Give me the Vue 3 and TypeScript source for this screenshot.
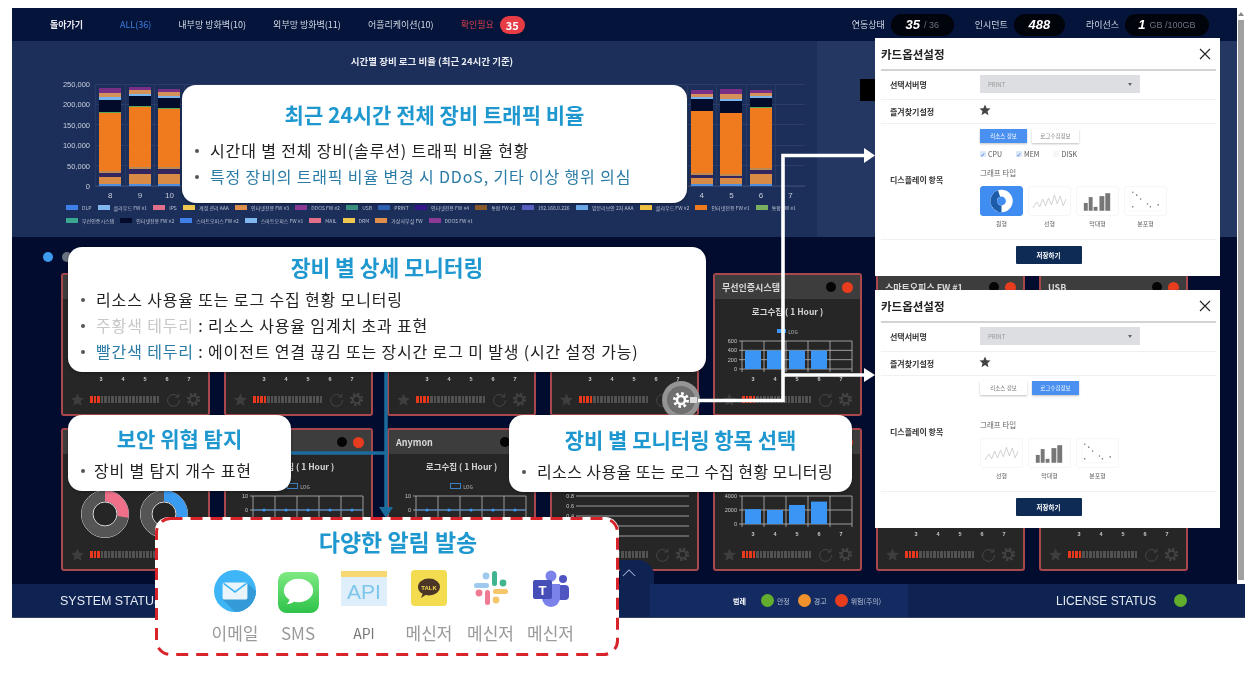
<script setup lang="ts">
interface Card {
  title: string
  kind: 'bars' | 'line' | 'donut' | 'level'
  ticks: string[]
  values: number[]
  lit: number
  covered?: boolean
  noAxis?: boolean
}

const tabs = [
  { label: 'ALL(36)', cls: 'tab--all' },
  { label: '내부망 방화벽(10)', cls: '' },
  { label: '외부망 방화벽(11)', cls: '' },
  { label: '어플리케이션(10)', cls: '' },
  { label: '확인필요', cls: 'tab--alert' },
]

const segColors = ['#4f8fe0', '#d98a45', '#33265f', '#b98a55', '#f07a1e', '#5aa858', '#020c2a', '#7ab3ee', '#d4925a', '#7a2f86']
const sample = [2, 8, 4, 2, 60, 1, 10, 2, 4, 4]
const hours = [8, 9, 10, 11, 12, 13, 14, 15, 16, 17, 18, 19, 20, 21, 22, 23, 0, 1, 2, 3, 4, 5, 6, 7]
const stacks: Record<number, number[]> = {
  8: [2, 7, 4, 2, 58, 1, 12, 3, 4, 5],
  9: [2, 10, 5, 2, 60, 1, 10, 2, 4, 3],
  10: [2, 10, 5, 2, 58, 1, 10, 2, 4, 3],
  4: [2, 6, 3, 2, 62, 0, 12, 2, 3, 4],
  5: [2, 6, 2, 2, 61, 0, 12, 2, 5, 5],
  6: [2, 10, 4, 2, 60, 1, 9, 2, 3, 3],
  7: [],
}
// only hours outside the callout get a label
const bars = hours.map((hour) => ({ hour, segs: stacks[hour] ?? sample, labelled: hour in stacks }))
const yLabels = ['250,000', '200,000', '150,000', '100,000', '50,000', '0']

const legendRows = [
  [
    ['DLP', '#3f7fe8'], ['클라우드 FW #1', '#7fb6ee'], ['IPS', '#e0708a'], ['계정 관리 AAA', '#f0c850'],
    ['인터넷전용 FW #3', '#e0904a'], ['DDOS FW #2', '#8a3a94'], ['USB', '#3a9080'], ['PRINT', '#2f5fb0'],
    ['인터넷전용 FW #4', '#33168a'], ['통합 FW #2', '#8a5a2a'], ['192.168.0.226', '#5a60c0'], ['망분리보안 2차 AAA', '#6aa8e8'],
    ['클라우드 FW #2', '#f0c040'], ['인터넷전용 FW #1', '#f07a1e'], ['통합 FW #1', '#78b060'],
  ],
  [
    ['무선인증시스템', '#3aa890'], ['인터넷전용 FW #2', '#020c2a'], ['스마트오피스 FW #2', '#3f7fe8'], ['스마트오피스 FW #1', '#7fb6ee'],
    ['MAIL', '#e0708a'], ['DRM', '#f0c850'], ['가상사무실 FW', '#e0904a'], ['DDOS FW #1', '#8a3a94'],
  ],
]

const cards: Card[] = [
  { title: '', kind: 'bars', ticks: [], values: [], lit: 3, covered: true },
  { title: '', kind: 'bars', ticks: [], values: [], lit: 4, covered: true },
  { title: '', kind: 'bars', ticks: [], values: [], lit: 4, covered: true },
  { title: '', kind: 'bars', ticks: [], values: [], lit: 4, covered: true },
  { title: '무선인증시스템', kind: 'bars', ticks: ['600', '400', '200', '0'], values: [.66, .66, .66, .66], lit: 4 },
  { title: '스마트오피스 FW #1', kind: 'bars', ticks: [], values: [], lit: 4, covered: true, noAxis: true },
  { title: 'USB', kind: 'bars', ticks: [], values: [], lit: 4, covered: true, noAxis: true },
  { title: '', kind: 'donut', ticks: [], values: [], lit: 3, covered: true },
  { title: '', kind: 'line', ticks: ['10', '0'], values: [], lit: 4, noAxis: true },
  { title: 'Anymon', kind: 'line', ticks: ['10', '0'], values: [], lit: 4, noAxis: true },
  { title: '', kind: 'level', ticks: ['0.8', '0.6', '0.4'], values: [], lit: 4, covered: true },
  { title: '', kind: 'bars', ticks: ['4000', '2000', '0'], values: [.53, .5, .68, .8], lit: 4, covered: true },
  { title: '', kind: 'bars', ticks: [], values: [], lit: 4, covered: true },
  { title: '', kind: 'bars', ticks: [], values: [], lit: 4, covered: true },
]

const modals = [
  { top: 38, resource: true, types: ['pie', 'line', 'bar', 'dot'] },
  { top: 290, resource: false, types: ['line', 'bar', 'dot'] },
]
const typeNames: Record<string, string> = { pie: '원형', line: '선형', bar: '막대형', dot: '분포형' }
const wave = '4,22 8,16 11,21 14,13 17,20 20,12 23,19 26,9 29,18 32,10 35,20 38,13'

const tickY = (card: Card, i: number) => {
  if (card.kind === 'line') return 7 + 14 * i
  if (card.kind === 'level') return 7 + 10 * i
  return 7 + (28 / (card.ticks.length - 1)) * i
}
</script>

<template>
  <div class="page">
    <div class="frame">
      <div class="upper">
        <div class="screen">
          <header class="topbar">
            <span class="back">돌아가기</span>
            <nav class="tabs">
              <span v-for="tab in tabs" :key="tab.label" class="tab" :class="tab.cls">{{ tab.label }}</span>
              <span class="badge">35</span>
            </nav>
            <div class="stats">
              <span class="stat-label">연동상태</span>
              <span class="pill pill--link"><b>35</b> / 36</span>
              <span class="stat-label">인시던트</span>
              <span class="pill pill--inc"><b>488</b></span>
              <span class="stat-label">라이선스</span>
              <span class="pill pill--lic"><b>1</b> GB /100GB</span>
            </div>
          </header>

          <section class="traffic">
            <div class="traffic-main">
              <h2 class="traffic-title">시간별 장비 로그 비율 (최근 24시간 기준)</h2>
              <div class="plot-wrap">
                <div class="y-axis">
                  <span v-for="label in yLabels" :key="label">{{ label }}</span>
                </div>
                <div class="plot">
                  <div v-for="bar in bars" :key="bar.hour" class="bar-col">
                    <div class="bar-stack">
                      <i
                        v-for="(h, i) in bar.segs"
                        :key="i"
                        :style="{ height: h + 'px', background: segColors[i] }"
                      ></i>
                    </div>
                    <span v-if="bar.labelled" class="bar-label">{{ bar.hour }}</span>
                  </div>
                </div>
              </div>
              <div class="legend">
                <div v-for="(row, r) in legendRows" :key="r" class="legend-row" :class="{ 'legend-row--fill': r === 0 }">
                  <span v-for="item in row" :key="item[0]" class="legend-item">
                    <i :style="{ background: item[1] }"></i>{{ item[0] }}
                  </span>
                </div>
              </div>
            </div>
            <div class="traffic-side">
              <div class="side-block"></div>
            </div>
          </section>

          <section class="devices">
            <div class="dots"><i class="dot dot--on"></i><i class="dot"></i></div>
            <div class="card-grid">
              <article v-for="(card, c) in cards" :key="c" class="card">
                <div class="card-head">
                  <span class="card-title">{{ card.title }}</span>
                  <i class="info"></i>
                  <i class="state"></i>
                </div>
                <div class="card-sub"><template v-if="!card.covered">로그수집 ( 1 Hour )</template></div>
                <div class="card-legend">
                  <template v-if="!card.covered"><i :class="{ 'hollow': card.kind === 'line' }"></i>LOG</template>
                </div>
                <svg class="card-chart" viewBox="0 0 149 56" width="149" height="56">
                  <template v-if="card.kind === 'donut'">
                    <g fill="none">
                      <circle cx="44" cy="25" r="23.5" stroke="#ddd" stroke-width="1" />
                      <circle cx="44" cy="25" r="18" stroke="#555" stroke-width="11" />
                      <circle cx="44" cy="25" r="18" stroke="#f0708a" stroke-width="11" stroke-dasharray="31 113" transform="rotate(-90 44 25)" />
                      <circle cx="44" cy="25" r="12" stroke="#ddd" stroke-width="1" />
                      <circle cx="103" cy="25" r="23.5" stroke="#ddd" stroke-width="1" />
                      <circle cx="103" cy="25" r="18" stroke="#555" stroke-width="11" />
                      <circle cx="103" cy="25" r="18" stroke="#3a9bf2" stroke-width="11" stroke-dasharray="36 113" transform="rotate(-90 103 25)" />
                      <circle cx="103" cy="25" r="12" stroke="#ddd" stroke-width="1" />
                    </g>
                  </template>
                  <template v-else>
                    <g v-for="(tick, i) in card.ticks" :key="tick">
                      <text x="24" :y="tickY(card, i) + 2" class="tick" text-anchor="end">{{ tick }}</text>
                      <line x1="26" x2="139" :y1="tickY(card, i)" :y2="tickY(card, i)" class="grid" />
                    </g>
                    <template v-if="card.kind === 'level'">
                      <line x1="26" x2="139" y1="37" y2="37" class="grid" />
                      <line x1="26" x2="139" y1="47" y2="47" class="grid" />
                    </template>
                    <template v-else>
                      <template v-if="card.ticks.length">
                        <line v-for="n in 6" :key="n" :x1="29 + (n - 1) * 22" :x2="29 + (n - 1) * 22" y1="7" y2="38" class="grid" />
                      </template>
                      <template v-if="!card.noAxis">
                        <text v-for="n in 5" :key="n" :x="40 + (n - 1) * 22" y="47" class="tick tick--x" text-anchor="middle">{{ n + 2 }}</text>
                      </template>
                    </template>
                    <template v-if="card.kind === 'bars'">
                      <rect
                        v-for="(v, i) in card.values"
                        :key="i"
                        :x="32 + i * 22"
                        :y="35 - v * 28"
                        width="16"
                        :height="v * 28"
                        fill="#3a95f5"
                      />
                    </template>
                    <template v-if="card.kind === 'line'">
                      <line x1="29" x2="139" y1="21" y2="21" stroke="#3a7fc0" stroke-width="1.2" />
                      <circle v-for="n in 5" :key="n" :cx="40 + (n - 1) * 22" cy="21" r="1.6" fill="#3a95f5" />
                    </template>
                  </template>
                </svg>
                <div class="card-foot">
                  <svg class="foot-icon" viewBox="0 0 24 24" width="15" height="15"><polygon points="12,2 15,9 22.5,9.5 16.8,14.4 18.6,22 12,18 5.4,22 7.2,14.4 1.5,9.5 9,9" fill="#3e3e3e" /></svg>
                  <div class="gauge">
                    <i v-for="n in 20" :key="n" :class="{ on: n <= card.lit }"></i>
                  </div>
                  <svg class="foot-icon" viewBox="0 0 24 24" width="15" height="15" fill="none" stroke="#4c4c4c" stroke-width="1.4"><path d="M19 7a9.5 9.5 0 1 0 2.5 6" /><path d="M20.5 2.5V8H15" /></svg>
                  <svg class="foot-icon" viewBox="0 0 24 24" width="15" height="15" fill="none" stroke="#444"><circle cx="12" cy="12" r="6" stroke-width="3" /><circle cx="12" cy="12" r="9" stroke-width="3.4" stroke-dasharray="3.6 3.47" /></svg>
                </div>
              </article>
            </div>
          </section>
        </div>
        <div class="scrollbar">
          <i class="scroll-up"></i>
          <i class="scroll-thumb"></i>
        </div>
      </div>
      <footer class="status">
        <span class="status-left">SYSTEM STATUS</span>
        <div class="status-mid">
          <b>범례</b>
          <i class="led led--green"></i><span>안정</span>
          <i class="led led--orange"></i><span>경고</span>
          <i class="led led--red"></i><span>위험(주의)</span>
        </div>
        <div class="status-right">
          <span>LICENSE STATUS</span>
          <i class="led led--green"></i>
        </div>
        <div class="up-tab">
          <svg viewBox="0 0 16 10" width="14" height="9" fill="none" stroke="#9fb2d4" stroke-width="1.2"><path d="M1 9l7-7 7 7" /></svg>
        </div>
      </footer>
    </div>

    <svg class="wires" viewBox="0 0 1250 682" width="1250" height="682">
      <g fill="none" stroke="#1b6c9c" stroke-width="3.5">
        <path d="M386 372V510" />
        <path d="M291 453H388" />
      </g>
      <polygon points="379,507 393,507 386,518" fill="#1b6c9c" />
      <circle cx="681" cy="400" r="19" fill="#949494" />
      <circle cx="681" cy="400" r="14" fill="#6f6f6f" />
      <g fill="none" stroke="#fff">
        <circle cx="681" cy="400" r="4" stroke-width="2.6" />
        <circle cx="681" cy="400" r="6.6" stroke-width="2.8" stroke-dasharray="2.6 2.58" />
      </g>
      <rect x="690" y="397" width="7" height="6" fill="#ddd" />
      <g fill="none" stroke="#fff" stroke-width="3.6">
        <path d="M698 400.5H783V155.5H866" />
        <path d="M783 375H866" />
      </g>
      <polygon points="864,148 875,155.5 864,163" fill="#fff" />
      <polygon points="864,368 875,375 864,382" fill="#fff" />
    </svg>

    <div class="callout callout--traffic">
      <h3>최근 24시간 전체 장비 트래픽 비율</h3>
      <ul>
        <li>시간대 별 전체 장비(솔루션) 트래픽 비율 현황</li>
        <li class="teal">특정 장비의 트래픽 비율 변경 시 DDoS, 기타 이상 행위 의심</li>
      </ul>
    </div>

    <div class="callout callout--detail">
      <h3>장비 별 상세 모니터링</h3>
      <ul>
        <li>리소스 사용율 또는 로그 수집 현황 모니터링</li>
        <li><span class="faint">주황색 테두리</span> : 리소스 사용율 임계치 초과 표현</li>
        <li><span class="teal">빨간색 테두리</span> : 에이전트 연결 끊김 또는 장시간 로그 미 발생 (시간 설정 가능)</li>
      </ul>
    </div>

    <div class="callout callout--threat">
      <h3>보안 위협 탐지</h3>
      <ul><li>장비 별 탐지 개수 표현</li></ul>
    </div>

    <div class="callout callout--select">
      <h3>장비 별 모니터링 항목 선택</h3>
      <ul><li>리소스 사용율 또는 로그 수집 현황 모니터링</li></ul>
    </div>

    <div class="callout callout--notify">
      <svg class="dash" viewBox="0 0 464 139" width="464" height="139">
        <rect x="1.5" y="1.5" width="461" height="136" rx="14" fill="none" stroke="#d8232a" stroke-width="3" stroke-dasharray="12 8" />
      </svg>
      <h3>다양한 알림 발송</h3>
      <div class="channels">
        <div class="channel">
          <div class="channel-icon">
            <svg viewBox="0 0 44 44" width="42" height="42">
              <circle cx="22" cy="22" r="22" fill="#3db5f6" />
              <path d="M35 14L44 22A22 22 0 0 1 22 44L9 31Z" fill="#349ad8" />
              <rect x="9" y="13" width="26" height="18" rx="2" fill="#e9f4fb" />
              <path d="M10 14l12 9 12-9" fill="none" stroke="#3db5f6" stroke-width="1.6" />
            </svg>
          </div>
          <span>이메일</span>
        </div>
        <div class="channel">
          <div class="channel-icon">
            <svg class="nudge-2" viewBox="0 0 42 42" width="41" height="41">
              <defs>
                <linearGradient id="smsGreen" x1="0" y1="0" x2="0" y2="1">
                  <stop offset="0" stop-color="#7fea82" />
                  <stop offset="1" stop-color="#2ec24a" />
                </linearGradient>
              </defs>
              <rect width="42" height="42" rx="9" fill="url(#smsGreen)" />
              <ellipse cx="21" cy="19" rx="15" ry="12" fill="#fff" />
              <path d="M12 27c0 3-2 5-3 6 4 0 7-2 9-4Z" fill="#fff" />
            </svg>
          </div>
          <span>SMS</span>
        </div>
        <div class="channel">
          <div class="channel-icon">
            <svg class="nudge-1" viewBox="0 0 46 35" width="46" height="35">
              <rect width="46" height="35" fill="#dfeefb" />
              <rect width="46" height="6" fill="#f7d873" />
              <text x="23" y="28" class="api-text" text-anchor="middle">API</text>
            </svg>
          </div>
          <span class="dark">API</span>
        </div>
        <div class="channel">
          <div class="channel-icon">
            <svg viewBox="0 0 36 36" width="36" height="36">
              <rect width="36" height="36" rx="4" fill="#f3dc50" />
              <ellipse cx="18" cy="17" rx="11" ry="8.5" fill="#4a3526" />
              <path d="M12 23l-2 5 6-4Z" fill="#4a3526" />
              <text x="18" y="20" class="talk-text" text-anchor="middle">TALK</text>
            </svg>
          </div>
          <span>메신저</span>
        </div>
        <div class="channel">
          <div class="channel-icon">
            <svg viewBox="0 0 36 36" width="36" height="36">
              <rect x="1" y="13" width="15" height="5" rx="2.5" fill="#9ec9ef" />
              <circle cx="13" cy="6" r="3.4" fill="#9ec9ef" />
              <rect x="19" y="1" width="5" height="15" rx="2.5" fill="#3fb58f" />
              <circle cx="30" cy="13" r="3.4" fill="#3fb58f" />
              <rect x="20" y="19" width="15" height="5" rx="2.5" fill="#f4c76a" />
              <circle cx="23" cy="30" r="3.4" fill="#f4c76a" />
              <rect x="12" y="20" width="5" height="15" rx="2.5" fill="#ee7a93" />
              <circle cx="6" cy="23" r="3.4" fill="#ee7a93" />
            </svg>
          </div>
          <span>메신저</span>
        </div>
        <div class="channel">
          <div class="channel-icon">
            <svg viewBox="0 0 38 38" width="38" height="38">
              <circle cx="31" cy="9" r="4" fill="#4f55c0" />
              <rect x="25" y="15" width="12" height="15" rx="4" fill="#4f55c0" />
              <circle cx="19" cy="6" r="5.5" fill="#7b83eb" />
              <path d="M10 14h18v14a9 9 0 0 1-18 0Z" fill="#7b83eb" />
              <rect x="1" y="10" width="19" height="19" rx="2" fill="#464eb8" />
              <text x="10.5" y="25" class="teams-text" text-anchor="middle">T</text>
            </svg>
          </div>
          <span>메신저</span>
        </div>
      </div>
    </div>

    <aside v-for="modal in modals" :key="modal.top" class="modal" :style="{ top: modal.top + 'px' }">
      <div class="modal-head">
        <strong>카드옵션설정</strong>
        <svg viewBox="0 0 12 12" width="12" height="12" fill="none" stroke="#222" stroke-width="1.1"><path d="M1 1l10 10M11 1L1 11" /></svg>
      </div>
      <div class="modal-row modal-row--server">
        <label>선택서버명</label>
        <div class="select"><span>PRINT</span><i></i></div>
      </div>
      <div class="modal-row modal-row--fav">
        <label>즐겨찾기설정</label>
        <svg class="fav-star" viewBox="0 0 24 24" width="12" height="12"><polygon points="12,1 15.2,8.6 23,9.2 17,14.4 18.9,22.5 12,18.2 5.1,22.5 7,14.4 1,9.2 8.8,8.6" fill="#444" /></svg>
      </div>
      <div class="modal-row modal-row--display">
        <label>디스플레이 항목</label>
        <div class="display">
          <div class="seg-btns">
            <span class="seg" :class="{ 'seg--on': modal.resource }">리소스 정보</span>
            <span class="seg" :class="{ 'seg--on': !modal.resource }">로그수집정보</span>
          </div>
          <div class="checks">
            <template v-if="modal.resource">
              <span class="check check--on">CPU</span>
              <span class="check check--on">MEM</span>
              <span class="check">DISK</span>
            </template>
          </div>
          <div class="graph-label">그래프 타입</div>
          <div class="tiles">
            <div v-for="type in modal.types" :key="type" class="tile">
              <div class="tile-box" :class="{ 'tile-box--on': type === 'pie' }">
                <svg viewBox="0 0 42 30" width="42" height="30">
                  <g v-if="type === 'pie'" fill="none" stroke-width="7">
                    <circle cx="21" cy="15" r="8" stroke="#fff" />
                    <path d="M21 23A8 8 0 0 1 18.5 7.4" stroke="#1c5cab" />
                  </g>
                  <polyline v-else-if="type === 'line'" :points="wave" fill="none" stroke="#c6c6c6" stroke-width=".8" />
                  <g v-else-if="type === 'bar'" fill="#777">
                    <rect x="7" y="17" width="4" height="8" /><rect x="12" y="11" width="4" height="14" /><rect x="17" y="21" width="4" height="4" />
                    <rect x="23" y="10" width="5" height="15" /><rect x="29" y="7" width="5" height="18" />
                  </g>
                  <g v-else fill="#777">
                    <circle cx="8" cy="6" r=".8" /><circle cx="12" cy="9" r=".8" /><circle cx="16" cy="13" r=".8" /><circle cx="23" cy="18" r=".8" /><circle cx="26" cy="21" r=".8" /><circle cx="34" cy="19" r=".8" /><circle cx="8" cy="21" r=".8" />
                    <path d="M5 4V25H38" fill="none" stroke="#eee" stroke-width=".5" />
                  </g>
                </svg>
              </div>
              <span>{{ typeNames[type] }}</span>
            </div>
          </div>
        </div>
      </div>
      <div class="modal-foot"><span class="save">저장하기</span></div>
    </aside>
  </div>
</template>

<style scoped>
.page {
  position: relative;
  width: 1250px;
  height: 682px;
  overflow: hidden;
  background: #fff;
  padding: 8px 0 0 12px;
  box-sizing: border-box;
  font-family: "Noto Sans CJK KR", "Noto Sans", sans-serif;
  filter: blur(0.6px);
}

.frame {
  width: 1233px;
}

.upper {
  display: flex;
}

.screen {
  width: 1225px;
  flex-shrink: 0;
}

.scrollbar {
  width: 8px;
  display: flex;
  flex-direction: column;
  align-items: center;
  padding-top: 4px;
  gap: 4px;
}

.scroll-up {
  width: 0;
  height: 0;
  border: 3px solid transparent;
  border-top: none;
  border-bottom: 4px solid #888;
}

.scroll-thumb {
  width: 6px;
  height: 560px;
  background: #a0a0a0;
}

/* top bar */
.topbar {
  height: 33px;
  background: #05143a;
  display: flex;
  align-items: center;
  padding-left: 38px;
  color: #d6dbe6;
  font-size: 9px;
}

.back {
  font-weight: 700;
  color: #e8eaf0;
  width: 70px;
}

.tabs {
  display: flex;
  align-items: center;
}

.tab {
  margin-right: 27px;
  white-space: nowrap;
  font-size: 9px;
}

.tab--all {
  color: #3f7fe0;
}

.tab--alert {
  color: #d8404a;
  margin-right: 6px;
}

.badge {
  width: 25px;
  height: 18px;
  border-radius: 9px;
  background: #e63c46;
  color: #fff;
  font-size: 11px;
  font-weight: 700;
  display: flex;
  align-items: center;
  justify-content: center;
}

.stats {
  margin-left: auto;
  display: flex;
  align-items: center;
  margin-right: 28px;
  gap: 6px;
  font-size: 9px;
}

.stat-label {
  margin-left: 15px;
  white-space: nowrap;
  color: #d6dbe6;
}

.pill {
  height: 22px;
  border-radius: 11px;
  background: #02040c;
  display: flex;
  align-items: center;
  justify-content: center;
  gap: 4px;
  color: #6d7280;
  font-size: 9px;
  font-family: "Liberation Sans", sans-serif;
  box-sizing: border-box;
}

.pill b {
  color: #fff;
  font-size: 13px;
  font-style: italic;
}

.pill--link { width: 63px; }
.pill--inc { width: 51px; }
.pill--lic { width: 84px; }

/* traffic chart */
.traffic {
  height: 196px;
  display: flex;
  background: #1c2f5a;
}

.traffic-main {
  width: 805px;
  flex-shrink: 0;
  position: relative;
}

.traffic-title {
  margin: 14px 0 0 35px;
  text-align: center;
  font-size: 9.5px;
  line-height: 12px;
  font-weight: 700;
  color: #e9ecf3;
}

.plot-wrap {
  display: flex;
  margin-top: 17px;
  height: 117px;
}

.y-axis {
  width: 78px;
  height: 114px;
  display: flex;
  flex-direction: column;
  justify-content: space-between;
  text-align: right;
  font-size: 7.5px;
  line-height: 12px;
  color: #c9cfdc;
  font-family: "Liberation Sans", sans-serif;
  margin-top: -5px;
}

.plot {
  margin-left: 5px;
  width: 710px;
  height: 102px;
  display: flex;
  align-items: flex-end;
  background: repeating-linear-gradient(to bottom, #2c3e68 0 1px, transparent 1px 20.2px);
  border-bottom: 1px solid #33446e;
}

.bar-col {
  flex: 1;
  height: 100%;
  position: relative;
  display: flex;
  flex-direction: column-reverse;
  align-items: center;
  border-left: 1px solid #283a64;
  box-sizing: border-box;
}

.bar-stack {
  width: 22px;
  display: flex;
  flex-direction: column-reverse;
}

.bar-stack i {
  display: block;
}

.bar-label {
  position: absolute;
  top: 107px;
  font-size: 8px;
  color: #c9cfdc;
  font-family: "Liberation Sans", sans-serif;
}

.legend {
  margin: 0 0 0 54px;
  width: 730px;
}

.legend-row {
  display: flex;
  gap: 6px;
  height: 13px;
  align-items: center;
}

.legend-row--fill {
  justify-content: space-between;
  gap: 0;
}

.legend-item {
  display: flex;
  align-items: center;
  gap: 4px;
  font-size: 5px;
  white-space: nowrap;
  color: #b8c0d2;
}

.legend-item i {
  width: 12px;
  height: 5px;
  flex-shrink: 0;
}

.traffic-side {
  flex: 1;
  background: #243763;
  padding: 38px 0 0 43px;
}

.side-block {
  width: 20px;
  height: 22px;
  background: #000;
}

/* device cards */
.devices {
  height: 347px;
  box-sizing: border-box;
  background: #020c2e;
  padding: 15px 0 0 31px;
}

.dots {
  display: flex;
  gap: 9px;
  height: 10px;
  margin-bottom: 11px;
}

.dot {
  width: 10px;
  height: 10px;
  border-radius: 50%;
  background: #6a7280;
}

.dot--on {
  background: #3d9cf0;
}

.card-grid {
  display: grid;
  grid-template-columns: repeat(7, 149px);
  grid-auto-rows: 143px;
  gap: 12px 14px;
  margin-left: 18px;
}

.card {
  border: 2px solid #a8484c;
  border-radius: 3px;
  background: #262626;
  box-sizing: border-box;
  overflow: hidden;
}

.card-head {
  height: 24px;
  background: #3d3d3d;
  display: flex;
  align-items: center;
  padding: 0 7px;
  gap: 6px;
}

.card-title {
  margin-right: auto;
  font-size: 9px;
  font-weight: 700;
  color: #d9d9d9;
  white-space: nowrap;
}

.info {
  width: 10px;
  height: 10px;
  border-radius: 50%;
  background: #050505;
}

.state {
  width: 11px;
  height: 11px;
  border-radius: 50%;
  background: #e83c1e;
}

.card-sub {
  text-align: center;
  margin-top: 6px;
  min-height: 12px;
  font-size: 8.5px;
  line-height: 12px;
  font-weight: 700;
  color: #d4d4d4;
}

.card-legend {
  margin-top: 10px;
  height: 8px;
  display: flex;
  align-items: center;
  justify-content: center;
  gap: 2px;
  font-size: 5px;
  color: #bbb;
}

.card-legend i {
  width: 9px;
  height: 4px;
  background: #3a95f5;
}

.card-legend i.hollow {
  background: transparent;
  border: 1px solid #3a7fc0;
}

.card-chart {
  display: block;
  margin: -1px 0 0 -2px;
}

.tick {
  font-size: 5.5px;
  fill: #c8c8c8;
  font-family: "Liberation Sans", sans-serif;
}

.tick--x {
  font-weight: 700;
}

.grid {
  stroke: #b9b9b9;
  stroke-width: 0.8;
}

.card-foot {
  display: flex;
  align-items: center;
  padding: 0 7px;
  margin-top: 2px;
  gap: 5px;
}

.foot-icon {
  flex-shrink: 0;
}

.gauge {
  display: flex;
  gap: 1px;
  width: 69px;
  margin-right: 2px;
}

.gauge i {
  width: 2.5px;
  height: 7px;
  background: #525252;
  flex-shrink: 0;
}

.gauge i.on {
  background: #e8391d;
}

/* bottom status bar */
.status {
  position: relative;
  height: 33px;
  background: #0e2352;
  display: flex;
  align-items: center;
  color: #e6eaf2;
  box-shadow: 0 1px 0 #33415f;
}

.status-left {
  margin-left: 48px;
  width: 590px;
  font-family: "Liberation Sans", sans-serif;
  font-size: 12.5px;
}

.status-mid {
  width: 258px;
  height: 100%;
  background: #142b61;
  display: flex;
  align-items: center;
  padding-left: 83px;
  box-sizing: border-box;
  margin-right: 148px;
  gap: 3px;
  font-size: 7px;
  color: #b7c1d6;
  white-space: nowrap;
}

.status-mid b {
  color: #fff;
  margin-right: 12px;
}

.status-mid span {
  margin-right: 5px;
}

.status-right {
  display: flex;
  align-items: center;
  gap: 18px;
  font-family: "Liberation Sans", sans-serif;
  font-size: 12px;
}

.led {
  width: 13px;
  height: 13px;
  border-radius: 50%;
  flex-shrink: 0;
}

.led--green { background: #62ae2c; }
.led--orange { background: #f2922c; }
.led--red { background: #e83c1e; }

.up-tab {
  position: absolute;
  left: 608px;
  top: -24px;
  width: 34px;
  height: 24px;
  background: #0e2352;
  border-radius: 0 16px 0 0;
  display: flex;
  align-items: center;
  padding-left: 2px;
  box-sizing: border-box;
}

/* overlays */
.wires {
  position: absolute;
  left: 0;
  top: 0;
  pointer-events: none;
}

.callout {
  position: absolute;
  box-sizing: border-box;
  background: #fff;
  border-radius: 14px;
  box-shadow: 0 1px 3px rgba(0, 0, 0, 0.35);
  color: #222;
}

.callout h3 {
  margin: 0;
  text-align: center;
  font-weight: 700;
  font-size: 21px;
  color: #1f98cf;
}

.callout ul {
  margin: 0;
  padding: 0;
  list-style: none;
}

.callout li {
  position: relative;
  padding-left: 28px;
  font-size: 16px;
  line-height: 26px;
  white-space: nowrap;
  letter-spacing: 0.85px;
}

.callout li::before {
  content: "";
  position: absolute;
  left: 13px;
  top: 12px;
  width: 4px;
  height: 4px;
  border-radius: 50%;
  background: #555;
}

.teal {
  color: #2a7ba6;
}

.faint {
  color: #c8c8c8;
}

.callout--traffic {
  left: 182px;
  top: 85px;
  width: 505px;
  height: 118px;
  padding-top: 14px;
}

.callout--traffic h3 {
  line-height: 30px;
  margin-bottom: 8px;
}

.callout--detail {
  left: 68px;
  top: 247px;
  width: 638px;
  height: 125px;
  padding-top: 6px;
}

.callout--detail h3 {
  font-size: 21.5px;
  line-height: 28px;
  margin-bottom: 5px;
}

.callout--threat {
  left: 68px;
  top: 415px;
  width: 223px;
  height: 76px;
  padding-top: 8px;
}

.callout--threat h3 {
  line-height: 30px;
  margin-bottom: 4px;
}

.callout--threat li {
  padding-left: 26px;
}

.callout--select {
  left: 509px;
  top: 415px;
  width: 343px;
  height: 77px;
  padding-top: 9px;
}

.callout--select h3 {
  line-height: 30px;
  margin-bottom: 4px;
}

.callout--select li {
  letter-spacing: 0.4px;
}

.callout--notify {
  left: 155px;
  top: 517px;
  width: 464px;
  height: 139px;
  box-shadow: none;
  padding-top: 8px;
}

.dash {
  position: absolute;
  left: 0;
  top: 0;
}

.callout--notify h3 {
  font-size: 23px;
  line-height: 32px;
  padding-left: 22px;
}

.channels {
  display: grid;
  grid-template-columns: 62px 64px 68px 62px 61px 59px;
  margin: 13px 0 0 49px;
}

.channel {
  display: flex;
  flex-direction: column;
  align-items: center;
}

.channel-icon {
  height: 44px;
}

.channel-icon svg {
  display: block;
}

.nudge-2 {
  margin-top: 2px;
}

.nudge-1 {
  margin-top: 1px;
}

.channel span {
  margin-top: 9px;
  font-size: 17px;
  line-height: 20px;
  color: #9a9a9a;
  white-space: nowrap;
}

.channel span.dark {
  color: #777;
  font-size: 14px;
}

.api-text {
  font-size: 21px;
  fill: #7cc7ea;
  font-family: "Liberation Sans", sans-serif;
}

.talk-text {
  font-size: 6px;
  font-weight: 700;
  fill: #f3dc50;
  font-family: "Liberation Sans", sans-serif;
}

.teams-text {
  font-size: 13px;
  font-weight: 700;
  fill: #fff;
  font-family: "Liberation Sans", sans-serif;
}

/* option modals */
.modal {
  position: absolute;
  left: 875px;
  width: 345px;
  height: 238px;
  background: #fff;
  box-sizing: border-box;
  padding: 0 4px 0 6px;
  color: #333;
}

.modal-head {
  height: 31px;
  display: flex;
  align-items: center;
  justify-content: space-between;
  border-bottom: 2px solid #d3d3d3;
  padding-right: 5px;
}

.modal-head strong {
  font-size: 11.5px;
  color: #222;
}

.modal-row {
  display: flex;
  padding-left: 9px;
  border-bottom: 1px solid #f0f0f0;
  box-sizing: border-box;
}

.modal-row label {
  width: 90px;
  flex-shrink: 0;
  font-size: 8px;
  font-weight: 700;
  color: #333;
}

.modal-row--server {
  height: 29px;
  align-items: center;
  padding-bottom: 2px;
}

.modal-row--fav {
  height: 24px;
  align-items: center;
}

.fav-star {
  margin: -4px 0 0 -1px;
}

.select {
  width: 160px;
  height: 18px;
  background: #dcdee2;
  display: flex;
  align-items: center;
  justify-content: space-between;
  padding: 0 8px;
  box-sizing: border-box;
  font-size: 6px;
  color: #999;
}

.select i {
  width: 0;
  height: 0;
  border: 2.5px solid transparent;
  border-top: 3px solid #666;
  border-bottom: none;
}

.modal-row--display {
  height: 116px;
  padding-top: 5px;
  align-items: flex-start;
}

.modal-row--display label {
  margin-top: 45px;
}

.seg-btns {
  display: flex;
  gap: 5px;
  height: 14px;
}

.seg {
  width: 47px;
  display: flex;
  align-items: center;
  justify-content: center;
  font-size: 5.5px;
  color: #777;
  background: #fff;
  box-shadow: 0 1px 2px rgba(0, 0, 0, 0.25);
}

.seg--on {
  background: #4a90f0;
  color: #fff;
}

.checks {
  height: 22px;
  display: flex;
  align-items: center;
  gap: 14px;
  font-size: 7px;
  color: #555;
}

.check {
  display: flex;
  align-items: center;
  gap: 2px;
}

.check::before {
  content: "";
  width: 6px;
  height: 6px;
  background: #f6f6f6;
  border-radius: 1px;
  display: flex;
  align-items: center;
  justify-content: center;
}

.check--on::before {
  content: "✓";
  background: #dbe8f9;
  color: #2f6fd0;
  font-size: 6px;
  font-weight: 700;
  font-family: "DejaVu Sans", sans-serif;
}

.graph-label {
  margin-top: 2px;
  height: 19px;
  font-size: 7.5px;
  line-height: 12px;
  color: #666;
}

.tiles {
  display: flex;
  gap: 5px;
}

.tile {
  width: 43px;
  display: flex;
  flex-direction: column;
  align-items: center;
  gap: 3px;
  font-size: 6px;
  color: #666;
}

.tile-box {
  width: 43px;
  height: 30px;
  box-sizing: border-box;
  border: 1px solid #f6f6f6;
  border-radius: 3px;
  display: flex;
  align-items: center;
  justify-content: center;
}

.tile-box--on {
  background: #3f8df0;
  border-color: #3f8df0;
}

.modal-foot {
  display: flex;
  justify-content: center;
  padding-top: 6px;
}

.save {
  width: 66px;
  height: 18px;
  background: #0d2b55;
  border-radius: 1px;
  color: #fff;
  font-size: 6.5px;
  font-weight: 700;
  display: flex;
  align-items: center;
  justify-content: center;
}
</style>

<style>
html,
body {
  margin: 0;
  background: #fff;
}
</style>
